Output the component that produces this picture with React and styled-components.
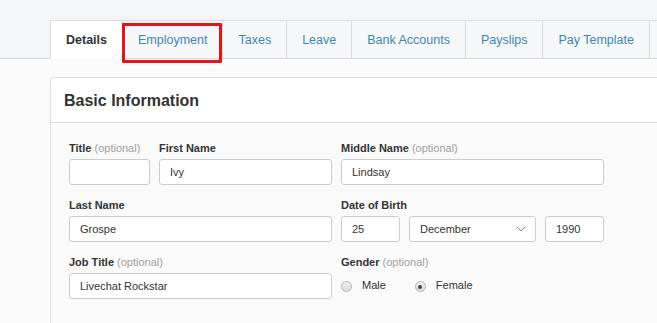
import React from "react";
import styled, { createGlobalStyle } from "styled-components";

const tabs = [
  { id: "details", label: "Details", active: true },
  { id: "employment", label: "Employment", highlighted: true },
  { id: "taxes", label: "Taxes" },
  { id: "leave", label: "Leave" },
  { id: "bank", label: "Bank Accounts" },
  { id: "payslips", label: "Payslips" },
  { id: "template", label: "Pay Template" },
  { id: "more", label: "" },
];

const App = () => {
  return (
    <Page>
      <GlobalStyle />
      <TabBar>
        {tabs.map((tab) => (
          <Tab key={tab.id} $active={tab.active}>
            {tab.label}
            {tab.highlighted && <Highlight />}
          </Tab>
        ))}
      </TabBar>
      <Content>
        <Card>
          <CardHeader>Basic Information</CardHeader>
          <CardBody>
            <Row>
              <Split>
                <Field $width="81px">
                  <Label>
                    Title <Optional>(optional)</Optional>
                  </Label>
                  <Input />
                </Field>
                <Field $grow>
                  <Label>First Name</Label>
                  <Input>Ivy</Input>
                </Field>
              </Split>
              <Field>
                <Label>
                  Middle Name <Optional>(optional)</Optional>
                </Label>
                <Input>Lindsay</Input>
              </Field>
            </Row>
            <Row>
              <Field>
                <Label>Last Name</Label>
                <Input>Grospe</Input>
              </Field>
              <Field>
                <Label>Date of Birth</Label>
                <Split>
                  <Input $width="59px">25</Input>
                  <Select>
                    December
                    <svg width="10" height="6" viewBox="0 0 10 6">
                      <path d="M1 1l4 4 4-4" fill="none" stroke="#888" strokeWidth="1" />
                    </svg>
                  </Select>
                  <Input $width="59px">1990</Input>
                </Split>
              </Field>
            </Row>
            <Row>
              <Field>
                <Label>
                  Job Title <Optional>(optional)</Optional>
                </Label>
                <Input>Livechat Rockstar</Input>
              </Field>
              <Field>
                <Label>
                  Gender <Optional>(optional)</Optional>
                </Label>
                <RadioGroup>
                  <RadioOption>
                    <Radio />
                    Male
                  </RadioOption>
                  <RadioOption>
                    <Radio $checked />
                    Female
                  </RadioOption>
                </RadioGroup>
              </Field>
            </Row>
          </CardBody>
        </Card>
      </Content>
    </Page>
  );
};

export default App;

const GlobalStyle = createGlobalStyle`
  * { box-sizing: border-box; }
  html, body {
    margin: 0;
    padding: 0;
    width: 657px;
    height: 323px;
    overflow: hidden;
    background: #fbfbfb;
    font-family: "Liberation Sans", Arial, sans-serif;
    color: #333;
  }
`;

const Page = styled.div`
  width: 657px;
  height: 323px;
  overflow: hidden;
  display: flex;
  flex-direction: column;
`;

const TabBar = styled.div`
  display: flex;
  padding: 20px 0 0 50px;
  background: #f4f5f7;
  border-bottom: 1px solid #dcdcdc;
  height: 59px;
  white-space: nowrap;
`;

const Tab = styled.div`
  position: relative;
  flex: none;
  min-width: 60px;
  height: 39px;
  margin-bottom: -1px;
  padding: 0 15px;
  display: flex;
  align-items: center;
  font-size: 12.5px;
  color: ${(p) => (p.$active ? "#333" : "#3d88ba")};
  font-weight: ${(p) => (p.$active ? 700 : 400)};
  background: ${(p) => (p.$active ? "#fff" : "#f6f7f8")};
  border-top: 1px solid #dcdcdc;
  border-right: 1px solid #dcdcdc;
  border-bottom: 1px solid ${(p) => (p.$active ? "#fff" : "#dcdcdc")};
  &:first-child {
    border-left: 1px solid #dcdcdc;
  }
`;

const Highlight = styled.span`
  position: absolute;
  left: -1px;
  top: 2px;
  width: 100px;
  height: 40px;
  border: 3px solid #e0161c;
  border-radius: 1px;
`;

const Content = styled.div`
  padding: 18px 0 0 50px;
`;

const Card = styled.div`
  width: 640px;
  border: 1px solid #dddddd;
  border-radius: 4px;
  background: #fafafa;
  overflow: hidden;
`;

const CardHeader = styled.div`
  height: 45px;
  padding: 1px 13px 0;
  display: flex;
  align-items: center;
  font-size: 16px;
  font-weight: 700;
  color: #333;
  background: #fff;
  border-bottom: 1px solid #dddddd;
`;

const CardBody = styled.div`
  padding: 18px 18px 40px;
  display: flex;
  flex-direction: column;
  gap: 13px;
`;

const Row = styled.div`
  display: grid;
  grid-template-columns: 263px 263px;
  column-gap: 9px;
`;

const Split = styled.div`
  display: flex;
  gap: 9px;
  align-items: flex-end;
`;

const Field = styled.div`
  display: flex;
  flex-direction: column;
  gap: 4px;
  width: ${(p) => p.$width || "auto"};
  flex: ${(p) => (p.$grow ? 1 : "none")};
`;

const Label = styled.div`
  font-size: 11px;
  line-height: 14px;
  font-weight: 700;
  color: #333;
  white-space: nowrap;
`;

const Optional = styled.span`
  font-weight: 400;
  color: #a0a0a0;
`;

const Input = styled.div`
  height: 26px;
  width: ${(p) => p.$width || "100%"};
  flex: none;
  padding: 0 10px;
  display: flex;
  align-items: center;
  font-size: 11px;
  color: #333;
  background: #fff;
  border: 1px solid #cccccc;
  border-radius: 3px;
`;

const Select = styled(Input)`
  width: 127px;
  justify-content: space-between;
  padding-right: 9px;
`;

const RadioGroup = styled.div`
  display: flex;
  align-items: center;
  gap: 29px;
  height: 26px;
  padding-bottom: 2px;
`;

const RadioOption = styled.label`
  display: flex;
  align-items: center;
  gap: 10px;
  font-size: 11px;
  color: #333;
`;

const Radio = styled.span`
  position: relative;
  width: 11px;
  height: 11px;
  margin-top: 3px;
  border-radius: 50%;
  border: 1px solid #b5b5b5;
  background: linear-gradient(#f2f2f2, #dcdcdc);
  &::after {
    content: "";
    display: ${(p) => (p.$checked ? "block" : "none")};
    position: absolute;
    left: 2.5px;
    top: 2.5px;
    width: 4px;
    height: 4px;
    border-radius: 50%;
    background: #444;
  }
`;
